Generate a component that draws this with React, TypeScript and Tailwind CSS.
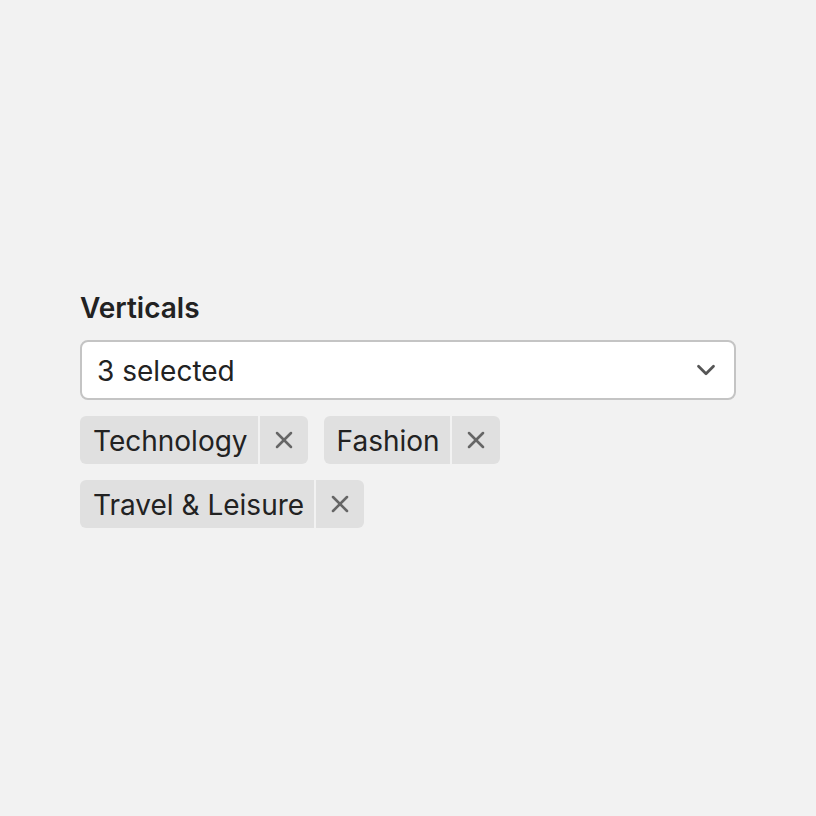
import { ChevronDown, X } from "lucide-react";

const items = ["Technology", "Fashion", "Travel & Leisure"];

function Chip({ label }: { label: string }) {
  return (
    <div className="flex h-12 items-stretch rounded-md overflow-hidden">
      <span className="flex items-center bg-[#e0e0e0] pl-[13px] pr-[10px] pt-[2px] text-[28px] text-[#222222]">
        {label}
      </span>
      <button
        type="button"
        className="ml-[2px] flex w-12 items-center justify-center bg-[#e0e0e0] text-[#666666]"
      >
        <X className="h-7 w-7" strokeWidth={2.2} />
      </button>
    </div>
  );
}

export default function App() {
  return (
    <div
      className="flex min-h-[816px] w-full flex-col bg-[#f2f2f2] px-20 pt-[290px]"
      style={{ fontFamily: "Inter, 'Noto Sans', sans-serif" }}
    >
      <label className="text-[28px] font-semibold leading-9 text-[#222222]">Verticals</label>
      <div className="mt-[14px] flex h-[60px] items-center justify-between rounded-lg border-2 border-[#c4c4c4] bg-white pl-[15px] pr-[13px]">
        <span className="pt-[2px] text-[28px] leading-none text-[#222222]">3 selected</span>
        <ChevronDown className="h-[30px] w-[30px] text-[#555555]" strokeWidth={2.2} />
      </div>
      <div className="mt-4 flex flex-wrap gap-4 max-w-[440px]">
        {items.map((item) => (
          <Chip key={item} label={item} />
        ))}
      </div>
    </div>
  );
}
